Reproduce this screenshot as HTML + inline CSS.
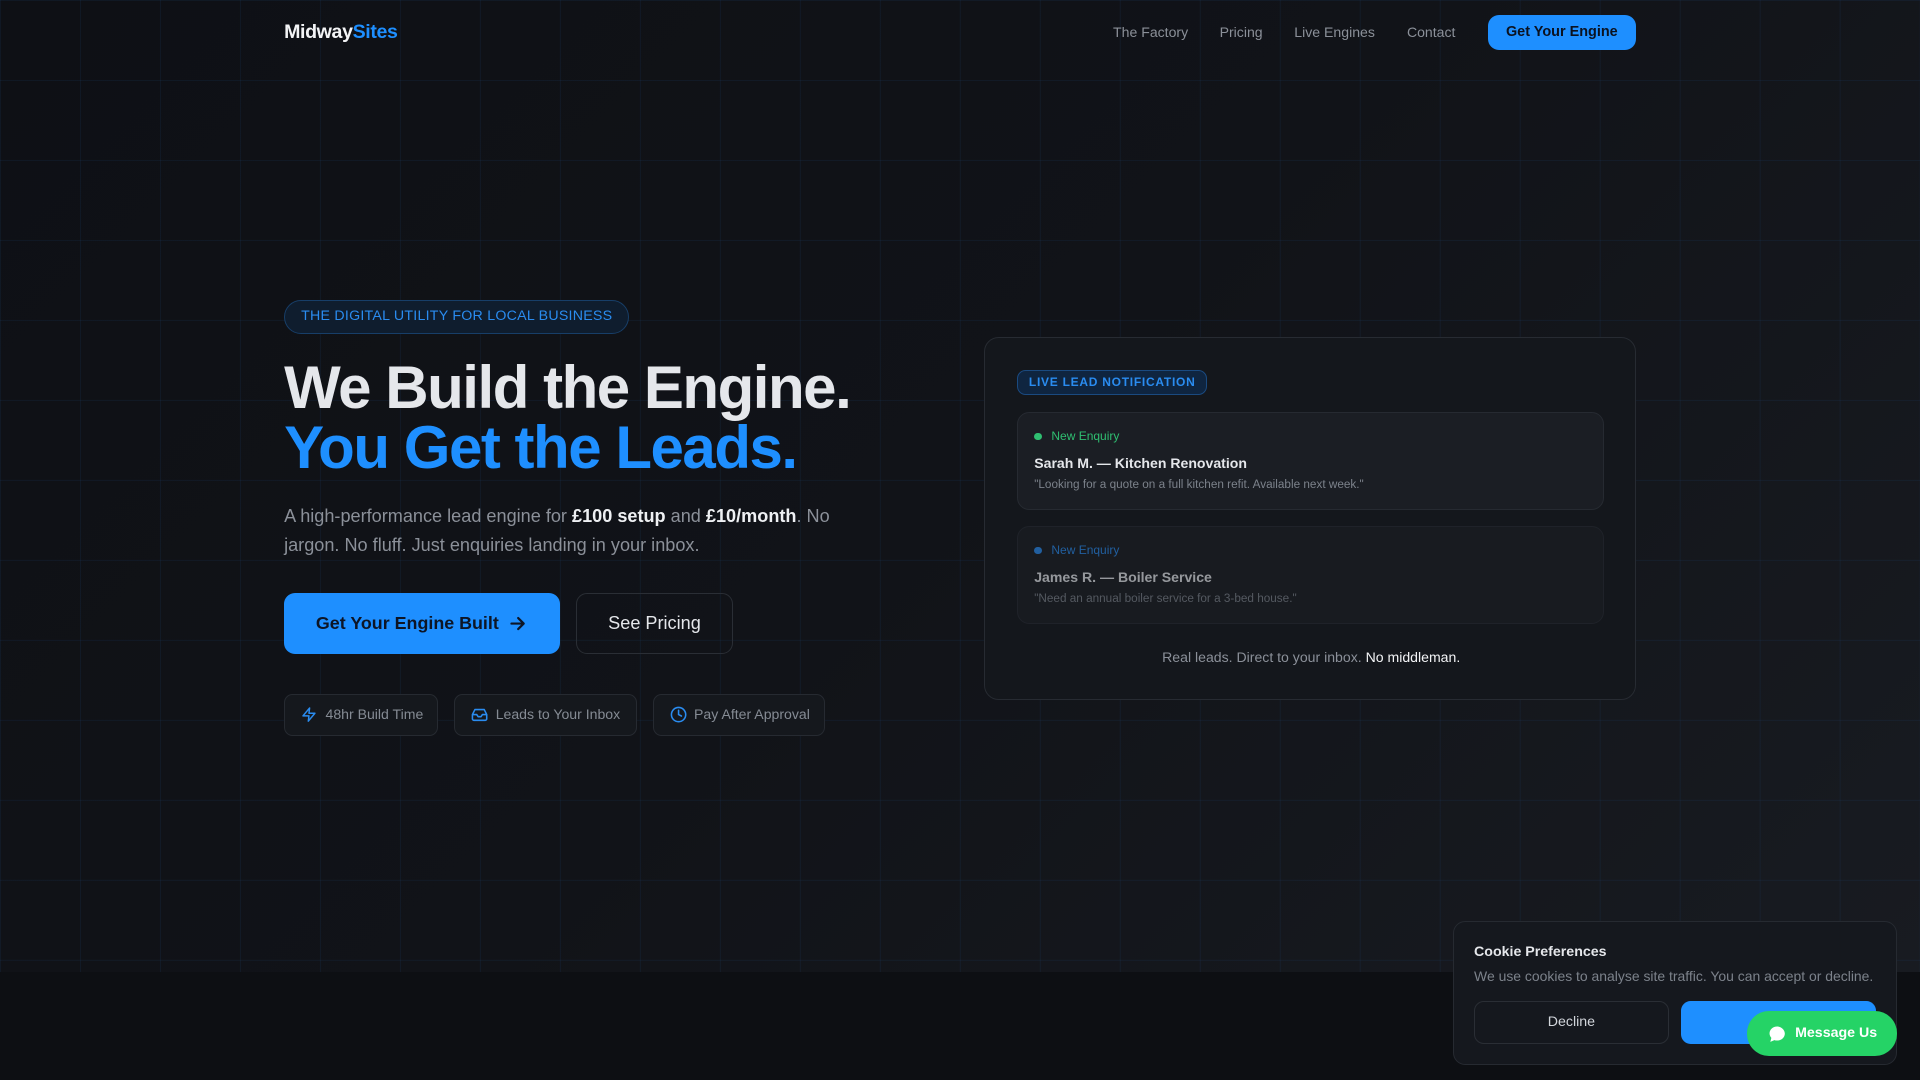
<!DOCTYPE html>
<html><head><meta charset="utf-8"><style>
html{zoom:1.2244898}
*{box-sizing:border-box;margin:0;padding:0}
body{width:1568px;height:882px;overflow:hidden;background:#0d0f13;font-family:"Liberation Sans",sans-serif;position:relative;color:#e5e7eb}
.hero{position:absolute;left:0;top:0;width:1568px;height:794px;background:linear-gradient(135deg,#0e1015 0%,#111318 50%,#181b21 100%)}
.grid{position:absolute;inset:0;background-image:linear-gradient(rgba(30,80,140,.13) 1px,transparent 1px),linear-gradient(90deg,rgba(30,80,140,.13) 1px,transparent 1px);background-size:65.33px 65.33px}
.abs{position:absolute}
.logo{left:232px;top:17px;font-size:16px;font-weight:700;color:#f3f4f6;letter-spacing:-.3px}
.logo span{color:#1e8fff}
.nav a{position:absolute;top:20px;font-size:11.5px;color:#8b9099;text-decoration:none}
.btn{background:#1e8fff;color:#0b1220;font-weight:700;border-radius:9px}
.badge{left:232px;top:245px;width:282px;height:28px;border:1px solid #173e68;background:#0f1d2e;border-radius:14px;color:#2a8cf0;font-size:11.6px;line-height:26px;text-align:center;letter-spacing:.2px}
h1{position:absolute;left:232px;top:292px;font-size:49px;line-height:49px;font-weight:700;letter-spacing:-1.2px;color:#e5e7eb}
h1 .b{color:#1e8fff}
.sub{left:232px;top:410px;width:450px;font-size:14.8px;line-height:24px;color:#8b9099}
.sub b{color:#eef0f3}
.chip{position:absolute;top:567px;height:34px;border:1px solid #262a31;background:#15181d;border-radius:7px;font-size:11.5px;color:#858b94;line-height:32px;padding-left:33px}
.chip svg{position:absolute;left:13px;top:9px}
.card{left:804px;top:275px;width:532px;height:297px;border:1px solid #272b32;border-radius:12px;background:#14171c}
.lead{position:absolute;left:26px;width:479px;height:80px;border:1px solid #262a31;border-radius:10px;background:#1b1e24}
.lead .t{position:absolute;left:27px;top:13px;font-size:9.8px}
.lead .dot{position:absolute;left:13px;top:16px;width:6px;height:6px;border-radius:50%}
.lead .n{position:absolute;left:13px;top:34px;font-size:11.5px;font-weight:700;color:#e5e7eb}
.lead .q{position:absolute;left:13px;top:53px;font-size:9.6px;color:#7c828b}
.cookie{left:1187px;top:752px;width:362px;height:118px;border:1px solid #262a31;border-radius:10px;background:#15181e}
</style></head><body>
<div class="hero"><div class="grid"></div></div>
<div class="abs logo">Midway<span>Sites</span></div>
<div class="nav"><a style="left:909px">The Factory</a><a style="left:996px">Pricing</a><a style="left:1057px">Live Engines</a><a style="left:1149px">Contact</a></div>
<div class="abs btn" style="left:1215px;top:12px;width:121px;height:29px;font-size:11.8px;line-height:29px;text-align:center">Get Your Engine</div>
<div class="abs badge">THE DIGITAL UTILITY FOR LOCAL BUSINESS</div>
<h1>We Build the Engine.<br><span class="b">You Get the Leads.</span></h1>
<div class="abs sub">A high-performance lead engine for <b>£100 setup</b> and <b>£10/month</b>. No jargon. No fluff. Just enquiries landing in your inbox.</div>
<div class="abs btn" style="left:232px;top:484px;width:225px;height:50px;font-size:14.6px;line-height:50px;padding-left:26px;color:#0d1525">Get Your Engine Built
<svg style="position:absolute;left:184px;top:18px" width="14" height="14" viewBox="0 0 14 14" fill="none" stroke="#0d1525" stroke-width="1.8" stroke-linecap="round" stroke-linejoin="round"><path d="M2 7h10M7.5 2.5 12 7l-4.5 4.5"/></svg></div>
<div class="abs" style="left:470px;top:484px;width:129px;height:50px;border:1px solid #2a2e35;border-radius:9px;font-size:14.8px;line-height:48px;text-align:center;color:#e5e7eb">See Pricing</div>
<div class="chip" style="left:232px;width:126px"><svg width="13" height="14" viewBox="0 0 24 24" fill="none" stroke="#2a8cf0" stroke-width="2.2" stroke-linejoin="round"><path d="M13 2 3 14h9l-1 8 10-12h-9l1-8z"/></svg>48hr Build Time</div>
<div class="chip" style="left:371px;width:149px"><svg width="14" height="14" viewBox="0 0 24 24" fill="none" stroke="#2a8cf0" stroke-width="2.2" stroke-linejoin="round"><path d="M22 12h-6l-2 3h-4l-2-3H2"/><path d="M5.5 5h13L22 12v6a2 2 0 0 1-2 2H4a2 2 0 0 1-2-2v-6z"/></svg>Leads to Your Inbox</div>
<div class="chip" style="left:533px;width:141px"><svg width="14" height="14" viewBox="0 0 24 24" fill="none" stroke="#2a8cf0" stroke-width="2.2" stroke-linecap="round"><circle cx="12" cy="12" r="10"/><path d="M12 6v6l4 2"/></svg>Pay After Approval</div>
<div class="abs card">
<div class="abs" style="left:26px;top:26px;height:21px;width:155px;border:1px solid #1a4a80;background:#0f2540;border-radius:7px;color:#2a8cf0;font-size:9.8px;font-weight:700;letter-spacing:.6px;line-height:19px;text-align:center">LIVE LEAD NOTIFICATION</div>
<div class="lead" style="top:61px"><span class="dot" style="background:#2fbf71"></span><span class="t" style="color:#2fbf71">New Enquiry</span><div class="n">Sarah M. — Kitchen Renovation</div><div class="q">"Looking for a quote on a full kitchen refit. Available next week."</div></div>
<div class="lead" style="top:154px;opacity:.62"><span class="dot" style="background:#2a8cf0"></span><span class="t" style="color:#2a8cf0">New Enquiry</span><div class="n">James R. — Boiler Service</div><div class="q">"Need an annual boiler service for a 3-bed house."</div></div>
<div class="abs" style="left:0;width:532px;top:254px;text-align:center;font-size:11.5px;color:#8b9099">Real leads. Direct to your inbox. <span style="color:#f3f4f6">No middleman.</span></div>
</div>
<div class="abs cookie">
<div class="abs" style="left:16px;top:18px;font-size:11.6px;font-weight:700;color:#e5e7eb">Cookie Preferences</div>
<div class="abs" style="left:16px;top:38px;font-size:11.4px;color:#7c828b;white-space:nowrap">We use cookies to analyse site traffic. You can accept or decline.</div>
<div class="abs" style="left:16px;top:65px;width:159px;height:35px;border:1px solid #2a2e35;border-radius:8px;text-align:center;line-height:33px;font-size:11.6px;color:#d1d5db">Decline</div>
<div class="abs" style="left:185px;top:65px;width:159px;height:35px;background:#1e8fff;border-radius:8px"></div>
</div>
<div class="abs" style="left:1427px;top:826px;width:122px;height:36px;background:#25d366;border-radius:18px;color:#fff;font-weight:700;font-size:11.6px;line-height:36px;padding-left:39px">
<svg style="position:absolute;left:17px;top:11px" width="15" height="15" viewBox="0 0 24 24"><path fill="#fff" d="M12 2C6.5 2 2 6 2 11c0 2.2.9 4.2 2.4 5.8L3 22l5.4-2.3c1.1.4 2.3.6 3.6.6 5.5 0 10-4 10-9S17.5 2 12 2z"/></svg>Message Us</div>
</body></html>
